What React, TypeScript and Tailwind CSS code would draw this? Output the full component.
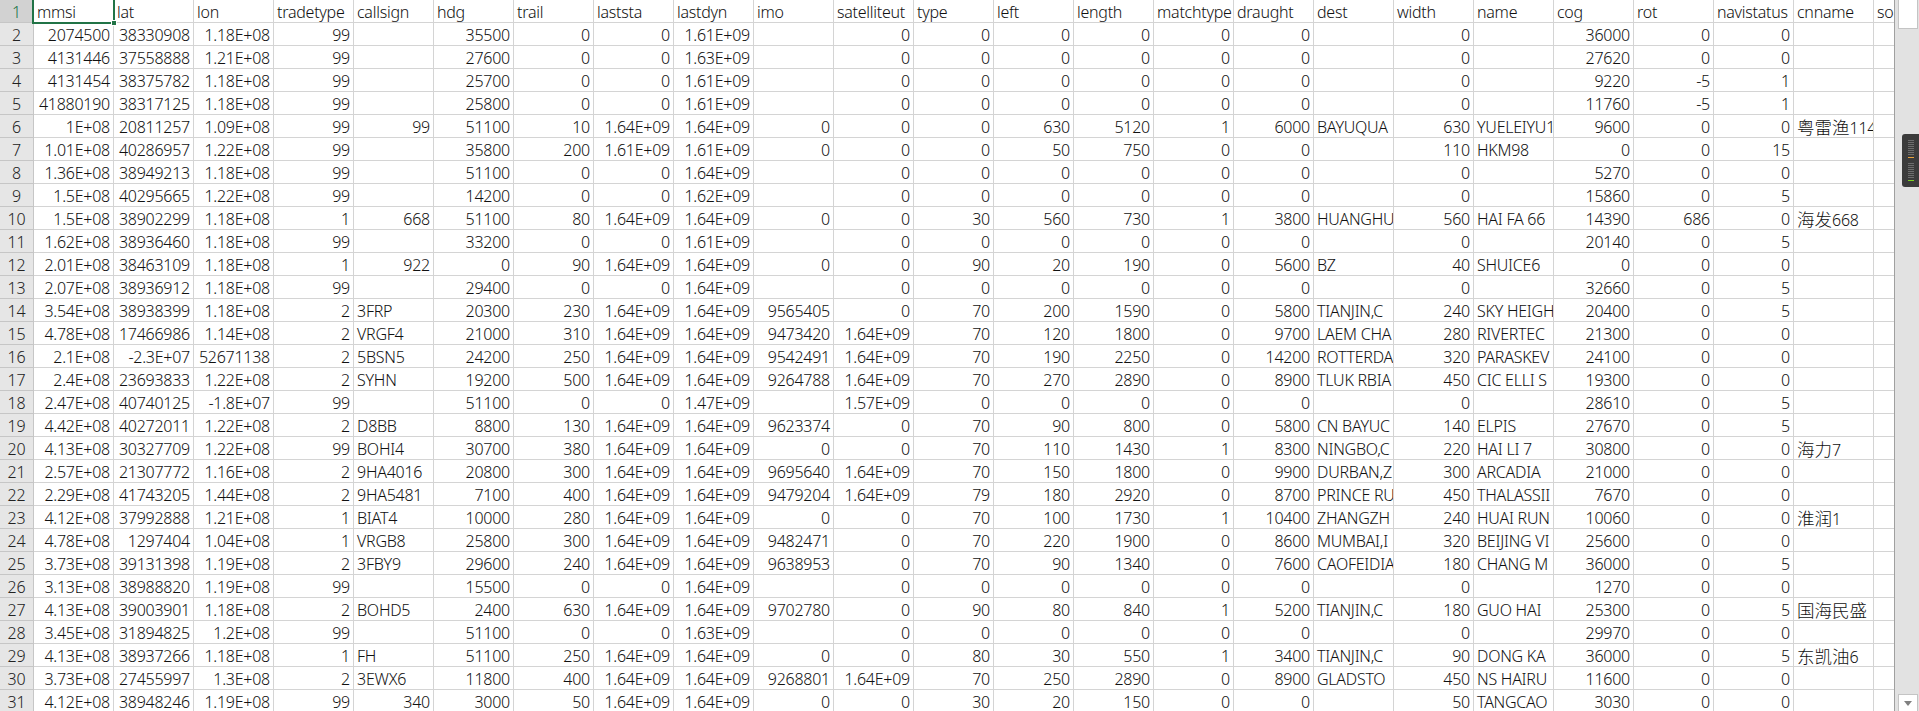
const headers = ["mmsi", "lat", "lon", "tradetype", "callsign", "hdg", "trail", "laststa", "lastdyn", "imo", "satelliteut", "type", "left", "length", "matchtype", "draught", "dest", "width", "name", "cog", "rot", "navistatus", "cnname", "so"];

const rows = [
  "2074500|38330908|1.18E+08|99||35500|0|0|1.61E+09||0|0|0|0|0|0||0||36000|0|0||",
  "4131446|37558888|1.21E+08|99||27600|0|0|1.63E+09||0|0|0|0|0|0||0||27620|0|0||",
  "4131454|38375782|1.18E+08|99||25700|0|0|1.61E+09||0|0|0|0|0|0||0||9220|-5|1||",
  "41880190|38317125|1.18E+08|99||25800|0|0|1.61E+09||0|0|0|0|0|0||0||11760|-5|1||",
  "1E+08|20811257|1.09E+08|99|99|51100|10|1.64E+09|1.64E+09|0|0|0|630|5120|1|6000|BAYUQUA|630|YUELEIYU1|9600|0|0|粤雷渔114|",
  "1.01E+08|40286957|1.22E+08|99||35800|200|1.61E+09|1.61E+09|0|0|0|50|750|0|0||110|HKM98|0|0|15||",
  "1.36E+08|38949213|1.18E+08|99||51100|0|0|1.64E+09||0|0|0|0|0|0||0||5270|0|0||",
  "1.5E+08|40295665|1.22E+08|99||14200|0|0|1.62E+09||0|0|0|0|0|0||0||15860|0|5||",
  "1.5E+08|38902299|1.18E+08|1|668|51100|80|1.64E+09|1.64E+09|0|0|30|560|730|1|3800|HUANGHU|560|HAI FA 66|14390|686|0|海发668|",
  "1.62E+08|38936460|1.18E+08|99||33200|0|0|1.61E+09||0|0|0|0|0|0||0||20140|0|5||",
  "2.01E+08|38463109|1.18E+08|1|922|0|90|1.64E+09|1.64E+09|0|0|90|20|190|0|5600|BZ|40|SHUICE6|0|0|0||",
  "2.07E+08|38936912|1.18E+08|99||29400|0|0|1.64E+09||0|0|0|0|0|0||0||32660|0|5||",
  "3.54E+08|38938399|1.18E+08|2|3FRP|20300|230|1.64E+09|1.64E+09|9565405|0|70|200|1590|0|5800|TIANJIN,C|240|SKY HEIGH|20400|0|5||",
  "4.78E+08|17466986|1.14E+08|2|VRGF4|21000|310|1.64E+09|1.64E+09|9473420|1.64E+09|70|120|1800|0|9700|LAEM CHA|280|RIVERTEC|21300|0|0||",
  "2.1E+08|-2.3E+07|52671138|2|5BSN5|24200|250|1.64E+09|1.64E+09|9542491|1.64E+09|70|190|2250|0|14200|ROTTERDA|320|PARASKEV|24100|0|0||",
  "2.4E+08|23693833|1.22E+08|2|SYHN|19200|500|1.64E+09|1.64E+09|9264788|1.64E+09|70|270|2890|0|8900|TLUK RBIA|450|CIC ELLI S|19300|0|0||",
  "2.47E+08|40740125|-1.8E+07|99||51100|0|0|1.47E+09||1.57E+09|0|0|0|0|0||0||28610|0|5||",
  "4.42E+08|40272011|1.22E+08|2|D8BB|8800|130|1.64E+09|1.64E+09|9623374|0|70|90|800|0|5800|CN BAYUC|140|ELPIS|27670|0|5||",
  "4.13E+08|30327709|1.22E+08|99|BOHI4|30700|380|1.64E+09|1.64E+09|0|0|70|110|1430|1|8300|NINGBO,C|220|HAI LI 7|30800|0|0|海力7|",
  "2.57E+08|21307772|1.16E+08|2|9HA4016|20800|300|1.64E+09|1.64E+09|9695640|1.64E+09|70|150|1800|0|9900|DURBAN,Z|300|ARCADIA|21000|0|0||",
  "2.29E+08|41743205|1.44E+08|2|9HA5481|7100|400|1.64E+09|1.64E+09|9479204|1.64E+09|79|180|2920|0|8700|PRINCE RU|450|THALASSII|7670|0|0||",
  "4.12E+08|37992888|1.21E+08|1|BIAT4|10000|280|1.64E+09|1.64E+09|0|0|70|100|1730|1|10400|ZHANGZH|240|HUAI RUN|10060|0|0|淮润1|",
  "4.78E+08|1297404|1.04E+08|1|VRGB8|25800|300|1.64E+09|1.64E+09|9482471|0|70|220|1900|0|8600|MUMBAI,I|320|BEIJING VI|25600|0|0||",
  "3.73E+08|39131398|1.19E+08|2|3FBY9|29600|240|1.64E+09|1.64E+09|9638953|0|70|90|1340|0|7600|CAOFEIDIA|180|CHANG M|36000|0|5||",
  "3.13E+08|38988820|1.19E+08|99||15500|0|0|1.64E+09||0|0|0|0|0|0||0||1270|0|0||",
  "4.13E+08|39003901|1.18E+08|2|BOHD5|2400|630|1.64E+09|1.64E+09|9702780|0|90|80|840|1|5200|TIANJIN,C|180|GUO HAI|25300|0|5|国海民盛|",
  "3.45E+08|31894825|1.2E+08|99||51100|0|0|1.63E+09||0|0|0|0|0|0||0||29970|0|0||",
  "4.13E+08|38937266|1.18E+08|1|FH|51100|250|1.64E+09|1.64E+09|0|0|80|30|550|1|3400|TIANJIN,C|90|DONG KA|36000|0|5|东凯油6|",
  "3.73E+08|27455997|1.3E+08|2|3EWX6|11800|400|1.64E+09|1.64E+09|9268801|1.64E+09|70|250|2890|0|8900|GLADSTO|450|NS HAIRU|11600|0|0||",
  "4.12E+08|38948246|1.19E+08|99|340|3000|50|1.64E+09|1.64E+09|0|0|30|20|150|0|0||50|TANGCAO|3030|0|0||",
].map((row) => row.split("|"));

const isNumber = (value: string) => /^-?[\d.]+(E\+\d+)?$/.test(value);

// chinese glyphs sit wider than the latin ones in the sheet's font
const CellText = ({ value }: { value: string }) => (
  <>
    {value.split(/([\u4e00-\u9fff]+)/).map((part, i) =>
      i % 2 ? (
        <span key={i} className="text-[17.5px] tracking-normal">
          {part}
        </span>
      ) : (
        part
      ),
    )}
  </>
);

const Cell = ({ value, header }: { value: string; header?: boolean }) => (
  <div
    className={`w-[80px] h-[23px] shrink-0 border-r border-b border-[#d4d4d4] overflow-hidden whitespace-nowrap pt-[2px] leading-[20px] px-[3px] ${
      !header && isNumber(value) ? "flex justify-end" : ""
    }`}
  >
    <CellText value={value} />
  </div>
);

const RowNumber = ({ value, active }: { value: number; active?: boolean }) => (
  <div
    className={`w-[34px] h-[23px] shrink-0 border-r border-b border-[#c6c6c6] text-center pt-[2px] leading-[20px] ${
      active ? "bg-[#d2d2d2] text-[#217346]" : "bg-[#e6e6e6] text-[#222]"
    }`}
  >
    {value}
  </div>
);

const ScrollTicks = ({ accent }: { accent: string }) => (
  <div className="flex flex-col gap-[1px]">
    {Array.from({ length: 8 }).map((_, i) => (
      <div key={i} className="w-[6px] h-[1px] bg-[#6d6d6d]" />
    ))}
    <div className={`w-[6px] h-[1px] mt-[1px] ${accent}`} />
  </div>
);

export default function App() {
  return (
    <div className="relative flex w-[1919px] h-[711px] overflow-hidden bg-white text-[16px] tracking-[-0.25px] font-light text-[#111] font-['Noto_Sans','Noto_Sans_CJK_SC',sans-serif]">
      <div className="flex-1 min-w-0 overflow-hidden">
        <div className="flex">
          <RowNumber value={1} active />
          {headers.map((h) => (
            <Cell key={h} value={h} header />
          ))}
        </div>
        {rows.map((row, i) => (
          <div key={i} className="flex">
            <RowNumber value={i + 2} />
            {row.map((value, j) => (
              <Cell key={j} value={value} />
            ))}
          </div>
        ))}
      </div>

      <div className="w-[25px] shrink-0 border-l border-[#a0a0a0] bg-[#e2e2e2] flex flex-col justify-between items-center pl-[2px]">
        <div className="w-[20px] h-[29px] bg-white border border-t-0 border-[#c4c4c4]" />
        <div className="w-[20px] h-[17px] bg-white border border-b-0 border-[#c4c4c4] flex items-center justify-center">
          <div className="w-0 h-0 border-x-[4px] border-x-transparent border-t-[5px] border-t-[#808080]" />
        </div>
      </div>

      {/* selected cell outline and fill handle */}
      <div className="absolute left-[32px] top-0 w-[83px] h-[24px] border-2 border-t-0 border-[#217346] pointer-events-none" />
      <div className="absolute left-[111px] top-[20px] w-[6px] h-[6px] bg-[#217346] border border-white" />

      {/* overlay widget on the scrollbar */}
      <div className="absolute left-[1902px] top-[134px] w-[17px] h-[53px] bg-[#3b3b3b] rounded-l-[3px] flex flex-col items-center justify-center gap-[5px]">
        <ScrollTicks accent="bg-[#e9a23b]" />
        <ScrollTicks accent="bg-[#7ed321]" />
      </div>
    </div>
  );
}
